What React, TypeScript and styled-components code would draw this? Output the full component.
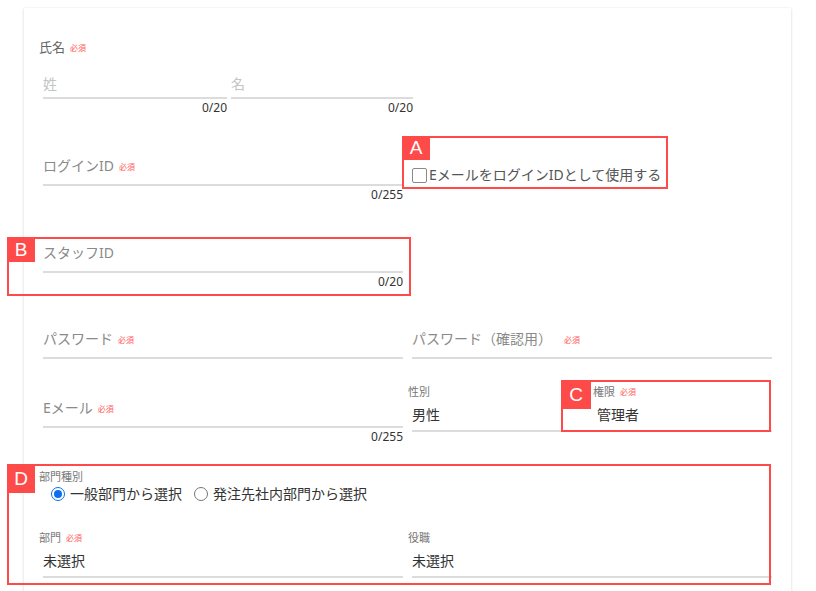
import React from 'react'
import styled, { createGlobalStyle } from 'styled-components'

const GlobalStyle = createGlobalStyle`
  html, body {
    margin: 0;
    padding: 0;
    background: #fff;
  }
  body {
    font-family: "Noto Sans", "Noto Sans CJK JP", sans-serif;
    color: #333;
    overflow: hidden;
  }
`

const Card = styled.div`
  margin: 8px 0 0 24px;
  width: 767px;
  min-height: 620px;
  box-sizing: border-box;
  padding: 30px 19px 0 19px;
  background: #fff;
  box-shadow: 0 1px 3px rgba(0, 0, 0, 0.14), 0 0 1px rgba(0, 0, 0, 0.08);
`

const Row = styled.div<{ $top?: number }>`
  display: grid;
  grid-template-columns: 360px 360px;
  column-gap: 9px;
  align-items: start;
  margin-top: ${p => p.$top ?? 0}px;
`

const NameRow = styled.div`
  display: grid;
  grid-template-columns: 184px 182px;
  column-gap: 4px;
  margin-top: 16px;
`

const GroupLabel = styled.div`
  margin-left: -4px;
  height: 18px;
  font-size: 13px;
  line-height: 18px;
  color: #666;
`

const Required = styled.span`
  display: inline-block;
  margin-left: 5px;
  font-size: 8px;
  line-height: 8px;
  color: #ff5a5a;
  vertical-align: 1px;
`

const InputBox = styled.div<{ $loose?: boolean; $muted?: boolean }>`
  height: 20px;
  padding: 2px 0 ${p => (p.$loose ? 8 : 3)}px;
  font-size: 14px;
  line-height: 20px;
  color: ${p => (p.$muted ? '#c4c4c4' : '#8a8a8a')};
  border-bottom: 2px solid #dcdcdc;
  white-space: nowrap;
`

const Counter = styled.div`
  height: 18px;
  text-align: right;
  font-size: 12px;
  line-height: 18px;
  color: #333;
`

const Offset = styled.div<{ $top: number }>`
  padding-top: ${p => p.$top}px;
`

const SmallLabel = styled.div`
  margin-left: -4px;
  height: 14px;
  font-size: 11px;
  line-height: 14px;
  color: #777;
  white-space: nowrap;
`

const SelectBox = styled.div`
  height: 20px;
  padding: 6px 0 5px;
  font-size: 14px;
  line-height: 20px;
  color: #333;
  border-bottom: 2px solid #dcdcdc;
`

const SplitCell = styled.div`
  display: grid;
  grid-template-columns: 175px 175px;
  column-gap: 10px;
`

const CheckLine = styled.label`
  display: inline-flex;
  align-items: center;
  margin-top: 11px;
  height: 20px;
  font-size: 14px;
  line-height: 20px;
  color: #555;
  white-space: nowrap;
`

const CheckBox = styled.span`
  width: 13px;
  height: 13px;
  border: 1.5px solid #8a8a8a;
  border-radius: 2px;
  margin-right: 2px;
`

const RadioGroup = styled.div`
  display: flex;
  align-items: center;
  gap: 12px;
  height: 20px;
  padding-left: 8px;
  font-size: 14px;
  line-height: 20px;
  color: #333;
`

const RadioItem = styled.label`
  display: flex;
  align-items: center;
  gap: 5px;
`

const RadioDot = styled.span<{ $on?: boolean }>`
  width: 12px;
  height: 12px;
  border-radius: 50%;
  border: 1.5px solid ${p => (p.$on ? '#0b6ff0' : '#777')};
  display: flex;
  align-items: center;
  justify-content: center;
  &::after {
    content: '';
    width: 8px;
    height: 8px;
    border-radius: 50%;
    background: ${p => (p.$on ? '#0b6ff0' : 'transparent')};
  }
`

// annotation frames drawn over the form
const Annotated = styled.div<{ $inline?: boolean; $top?: number }>`
  position: relative;
  display: ${p => (p.$inline ? 'inline-block' : 'block')};
  margin-top: ${p => p.$top ?? 0}px;
`

type Insets = { t: number; r: number; b: number; l: number }

const Frame = styled.div<{ $i: Insets }>`
  position: absolute;
  top: ${p => p.$i.t}px;
  right: ${p => p.$i.r}px;
  bottom: ${p => p.$i.b}px;
  left: ${p => p.$i.l}px;
  border: 2px solid #ff4a4a;
  pointer-events: none;
`

const Badge = styled.span<{ $w: number; $h: number }>`
  position: absolute;
  top: -2px;
  left: -2px;
  width: ${p => p.$w}px;
  height: ${p => p.$h}px;
  background: #ff4a4a;
  color: #fff;
  font-family: "Liberation Sans", Arial, sans-serif;
  font-size: 19px;
  display: flex;
  align-items: center;
  justify-content: center;
`

const Mark = ({ tag, i, w = 28, h = 26 }: { tag: string; i: Insets; w?: number; h?: number }) => (
  <Frame $i={i}>
    <Badge $w={w} $h={h}>{tag}</Badge>
  </Frame>
)

const Field = ({ label, req, counter }: { label: string; req?: boolean; counter?: string }) => (
  <div>
    <InputBox $loose>
      {label}
      {req && <Required>必須</Required>}
    </InputBox>
    {counter && <Counter>{counter}</Counter>}
  </div>
)

const Select = ({ label, req, value }: { label: string; req?: boolean; value: string }) => (
  <div>
    <SmallLabel>
      {label}
      {req && <Required>必須</Required>}
    </SmallLabel>
    <SelectBox>{value}</SelectBox>
  </div>
)

export default function App() {
  return (
    <>
      <GlobalStyle />
      <Card>
        <GroupLabel>
          氏名<Required>必須</Required>
        </GroupLabel>
        <NameRow>
          <div>
            <InputBox $muted>姓</InputBox>
            <Counter>0/20</Counter>
          </div>
          <div>
            <InputBox $muted>名</InputBox>
            <Counter>0/20</Counter>
          </div>
        </NameRow>

        <Row $top={37}>
          <Field label="ログインID" req counter="0/255" />
          <div>
            <Annotated $inline>
              <CheckLine>
                <CheckBox />
                EメールをログインIDとして使用する
              </CheckLine>
              <Mark tag="A" i={{ t: -18, r: -7, b: -1, l: -10 }} w={28} h={24} />
            </Annotated>
          </div>
        </Row>

        <Row $top={37}>
          <Annotated>
            <Field label="スタッフID" counter="0/20" />
            <Mark tag="B" i={{ t: -4, r: -8, b: -5, l: -36 }} w={28} h={25} />
          </Annotated>
        </Row>

        <Row $top={36}>
          <Field label="パスワード" req />
          <Field label="パスワード（確認用）　" req />
        </Row>

        <Row $top={26}>
          <Offset $top={11}>
            <Field label="Eメール" req counter="0/255" />
          </Offset>
          <SplitCell>
            <Select label="性別" value="男性" />
            <Annotated>
              <Select label="権限" req value="管理者" />
              <Mark tag="C" i={{ t: -5, r: 1, b: 0, l: -36 }} w={30} h={29} />
            </Annotated>
          </SplitCell>
        </Row>

        <Annotated $top={24}>
          <SmallLabel>部門種別</SmallLabel>
          <RadioGroup>
            <RadioItem>
              <RadioDot $on />
              一般部門から選択
            </RadioItem>
            <RadioItem>
              <RadioDot />
              発注先社内部門から選択
            </RadioItem>
          </RadioGroup>
          <Row $top={27}>
            <Select label="部門" req value="未選択" />
            <Select label="役職" value="未選択" />
          </Row>
          <Mark tag="D" i={{ t: -6, r: 1, b: -7, l: -36 }} w={28} h={29} />
        </Annotated>
      </Card>
    </>
  )
}
